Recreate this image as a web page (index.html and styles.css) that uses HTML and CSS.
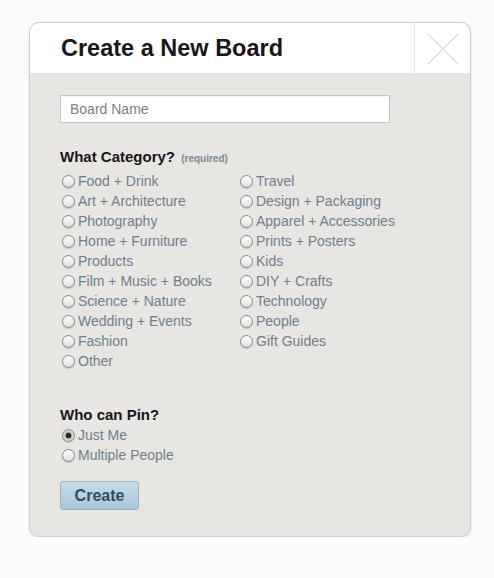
FILE: index.html
```html
<!DOCTYPE html>
<html>
<head>
<meta charset="utf-8">
<link rel="stylesheet" href="styles.css">
</head>
<body>
<div class="page">
  <div class="card">
    <div class="header">
      <h1 class="title">Create a New Board</h1>
      <div class="close">
        <svg width="32" height="32" viewBox="0 0 32 32"><path d="M1 1 L31 31 M31 1 L1 31" stroke="#dcdcdc" stroke-width="1.2" fill="none"/></svg>
      </div>
    </div>
    <div class="body">
      <div class="field">Board Name</div>
      <h2 class="label">What Category? <span class="req">(required)</span></h2>
      <div class="grid">
        <div class="col">
          <label class="opt"><input type="radio" name="c"><span>Food + Drink</span></label>
          <label class="opt"><input type="radio" name="c"><span>Art + Architecture</span></label>
          <label class="opt"><input type="radio" name="c"><span>Photography</span></label>
          <label class="opt"><input type="radio" name="c"><span>Home + Furniture</span></label>
          <label class="opt"><input type="radio" name="c"><span>Products</span></label>
          <label class="opt"><input type="radio" name="c"><span>Film + Music + Books</span></label>
          <label class="opt"><input type="radio" name="c"><span>Science + Nature</span></label>
          <label class="opt"><input type="radio" name="c"><span>Wedding + Events</span></label>
          <label class="opt"><input type="radio" name="c"><span>Fashion</span></label>
          <label class="opt"><input type="radio" name="c"><span>Other</span></label>
        </div>
        <div class="col">
          <label class="opt"><input type="radio" name="c"><span>Travel</span></label>
          <label class="opt"><input type="radio" name="c"><span>Design + Packaging</span></label>
          <label class="opt"><input type="radio" name="c"><span>Apparel + Accessories</span></label>
          <label class="opt"><input type="radio" name="c"><span>Prints + Posters</span></label>
          <label class="opt"><input type="radio" name="c"><span>Kids</span></label>
          <label class="opt"><input type="radio" name="c"><span>DIY + Crafts</span></label>
          <label class="opt"><input type="radio" name="c"><span>Technology</span></label>
          <label class="opt"><input type="radio" name="c"><span>People</span></label>
          <label class="opt"><input type="radio" name="c"><span>Gift Guides</span></label>
        </div>
      </div>
      <h2 class="label pin">Who can Pin?</h2>
      <div class="col">
        <label class="opt"><input type="radio" name="p" checked><span>Just Me</span></label>
        <label class="opt"><input type="radio" name="p"><span>Multiple People</span></label>
      </div>
      <button class="btn">Create</button>
    </div>
  </div>
</div>
</body>
</html>
```
FILE: styles.css
```css
* { box-sizing: border-box; }
html, body { margin: 0; padding: 0; }
body {
  background: #fcfcfc;
  font-family: "Liberation Sans", Arial, sans-serif;
}
.page {
  padding: 22px 0 0 29px;
}
.card {
  width: 442px;
  border: 1px solid #cdcdcb;
  border-radius: 10px;
  background: #e7e6e2;
  box-shadow: 0 1px 3px rgba(0,0,0,0.12);
  overflow: hidden;
}
.header {
  display: flex;
  height: 50px;
  background: #fff;
}
.title {
  flex: 1;
  margin: 0;
  padding: 12px 0 0 31px;
  font-size: 23.5px;
  line-height: 26px;
  font-weight: bold;
  color: #1b141a;
}
.close {
  width: 56px;
  border-left: 1px solid #e8e8e8;
  display: flex;
  align-items: center;
  justify-content: center;
  padding-top: 1px;
}
.body {
  padding: 22px 30px 26px 30px;
}
.field {
  width: 330px;
  height: 28px;
  background: #fff;
  border: 1px solid #c6c6c4;
  box-shadow: inset 0 1px 1px rgba(0,0,0,0.05);
  padding: 0 9px;
  font-size: 14px;
  line-height: 26px;
  color: #808080;
}
.label {
  margin: 25px 0 0 0;
  font-size: 15px;
  line-height: 18px;
  font-weight: bold;
  color: #1b141a;
}
.req {
  font-size: 10px;
  color: #7d8a94;
  margin-left: 2px;
}
.grid {
  display: grid;
  grid-template-columns: 178px auto;
  margin-top: 3px;
}
.col {
  display: flex;
  flex-direction: column;
}
.opt {
  display: flex;
  align-items: center;
  height: 20px;
  padding-left: 2px;
  font-size: 14px;
  color: #6f7f8c;
  gap: 3px;
}
.opt input {
  -webkit-appearance: none;
  appearance: none;
  margin: 0;
  width: 13px;
  height: 13px;
  border-radius: 50%;
  border: 1px solid #878787;
  background: linear-gradient(#ffffff, #dedede);
  box-shadow: 0 1px 1px rgba(0,0,0,0.14);
  flex: none;
}
.opt input:checked {
  background: radial-gradient(circle, #2a2a2a 0, #2a2a2a 2.5px, #bdbdbd 3.2px, #e9e9e9 6px);
}
.pin {
  margin-top: 35px;
  margin-bottom: 1px;
}
.btn {
  display: block;
  margin-top: 16px;
  width: 79px;
  height: 29px;
  border: 1px solid #9eb2be;
  border-radius: 3px;
  background: linear-gradient(#c6dce9, #a9c7d8);
  font-family: "Liberation Sans", Arial, sans-serif;
  font-size: 16px;
  font-weight: bold;
  color: #2f4e5c;
  padding: 0;
}
```
